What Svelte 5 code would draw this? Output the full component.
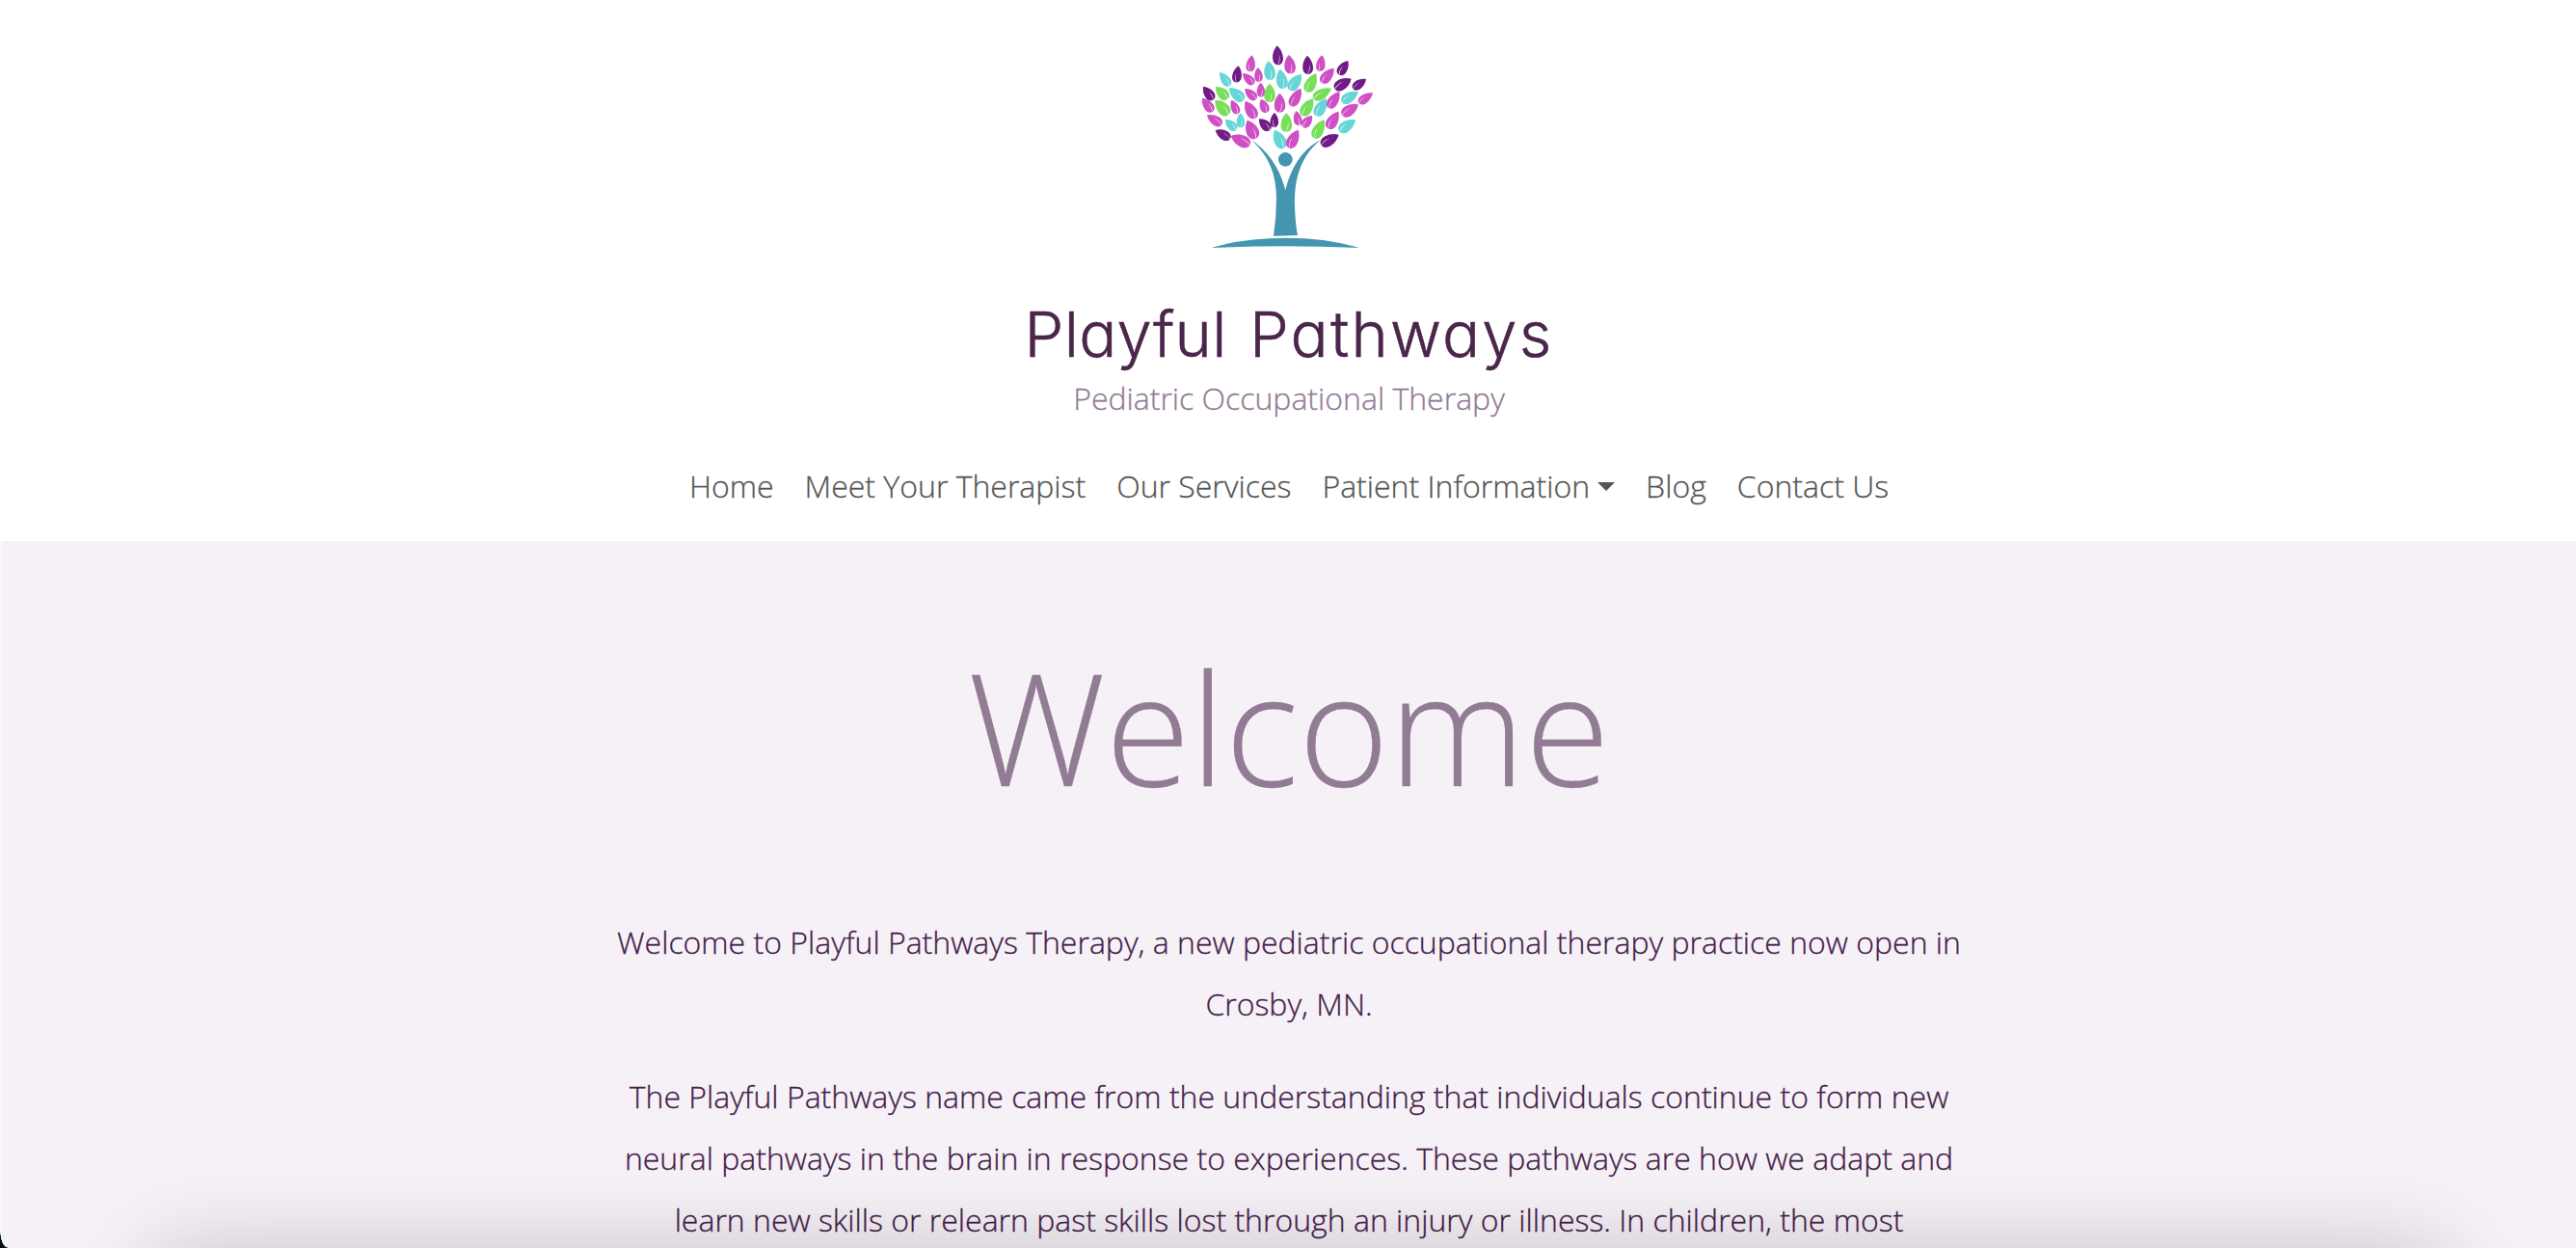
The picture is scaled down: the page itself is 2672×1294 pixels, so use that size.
<script>
  // Each leaf: tip x, tip y, base x, base y, width, colour key
  const leaves = [
    [284, 22, 288, 82, 30, 'v'], [206, 52, 199, 103, 26, 'p'], [164, 85, 156, 136, 27, 'v'],
    [224, 90, 228, 135, 24, 'p'], [177, 108, 212, 142, 24, 'p'], [106, 105, 137, 147, 26, 'c'],
    [257, 70, 264, 129, 32, 'c'], [292, 95, 304, 156, 32, 'c'], [54, 149, 86, 190, 28, 'v'],
    [93, 150, 131, 187, 30, 'g'], [135, 154, 180, 192, 32, 'c'], [184, 156, 219, 189, 26, 'p'],
    [233, 137, 234, 182, 24, 'p'], [261, 140, 261, 198, 32, 'g'], [51, 185, 84, 227, 28, 'p'],
    [91, 191, 134, 236, 34, 'g'], [142, 191, 162, 234, 24, 'p'], [185, 194, 217, 248, 32, 'p'],
    [234, 188, 252, 230, 26, 'p'], [292, 170, 293, 230, 32, 'p'], [66, 238, 112, 268, 28, 'p'],
    [123, 252, 157, 284, 26, 'c'], [170, 232, 171, 277, 24, 'c'], [228, 250, 262, 284, 28, 'v'],
    [276, 230, 275, 276, 24, 'v'], [313, 232, 313, 290, 32, 'g'], [191, 254, 218, 311, 36, 'p'],
    [92, 285, 138, 311, 28, 'v'], [140, 303, 200, 330, 34, 'p'], [276, 284, 305, 341, 34, 'c'],
    [350, 284, 320, 340, 32, 'p'], [320, 51, 327, 109, 32, 'p'], [378, 53, 381, 111, 30, 'v'],
    [424, 52, 417, 102, 26, 'p'], [461, 92, 422, 137, 30, 'p'], [505, 69, 476, 112, 28, 'v'],
    [360, 111, 322, 160, 32, 'c'], [405, 108, 376, 166, 32, 'g'], [515, 125, 463, 156, 32, 'v'],
    [561, 126, 520, 156, 26, 'v'], [453, 155, 397, 187, 30, 'g'], [358, 155, 327, 210, 30, 'p'],
    [537, 166, 485, 197, 30, 'c'], [582, 169, 538, 200, 26, 'p'], [478, 165, 444, 216, 30, 'p'],
    [396, 187, 362, 239, 32, 'g'], [437, 186, 405, 240, 32, 'c'], [537, 205, 486, 238, 32, 'p'],
    [343, 225, 352, 270, 24, 'p'], [393, 240, 364, 275, 26, 'p'], [475, 227, 442, 280, 32, 'p'],
    [528, 253, 477, 288, 32, 'c'], [430, 252, 399, 310, 32, 'g'], [476, 299, 421, 331, 32, 'v']
  ].map(([tx, ty, bx, by, w, tone]) => {
    const len = Math.hypot(bx - tx, by - ty);
    const turn = (Math.atan2(by - ty, bx - tx) * 180) / Math.PI - 90;
    const h = w / 2;
    const side = bx >= tx ? -1 : 1;
    return {
      tone,
      at: `translate(${tx} ${ty}) rotate(${turn})`,
      body: `M0 0C${h * 0.6} ${len * 0.15} ${h * 1.08} ${len * 0.38} ${h * 1.08} ${len * 0.65}C${h * 1.08} ${len * 0.86} ${h * 0.6} ${len} 0 ${len}C${-h * 0.6} ${len} ${-h * 1.08} ${len * 0.86} ${-h * 1.08} ${len * 0.65}C${-h * 1.08} ${len * 0.38} ${-h * 0.6} ${len * 0.15} 0 0Z`,
      vein: `M${side * h * 0.05} ${len}Q${side * h * -0.6} ${len * 0.75} ${side * h * -0.3} ${len * 0.45}Q${side * h * -0.4} ${len * 0.78} ${side * h * 0.15} ${len}Z`
    };
  });

  const links = [
    { label: 'Home' },
    { label: 'Meet Your Therapist' },
    { label: 'Our Services' },
    { label: 'Patient Information', menu: true },
    { label: 'Blog' },
    { label: 'Contact Us' }
  ];

  const paragraphs = [
    ['Welcome to Playful Pathways Therapy, a new pediatric occupational therapy practice now open in', 'Crosby, MN.'],
    [
      'The Playful Pathways name came from the understanding that individuals continue to form new',
      'neural pathways in the brain in response to experiences. These pathways are how we adapt and',
      'learn new skills or relearn past skills lost through an injury or illness. In children, the most'
    ]
  ];
</script>

<div class="page">
  <header>
    <svg class="logo" viewBox="-9 0 660 660" aria-hidden="true">
      {#each leaves as leaf}
        <g transform={leaf.at}>
          <path class={leaf.tone} d={leaf.body} />
          <path class="vein" d={leaf.vein} />
        </g>
      {/each}
      <g class="trunk">
        <path d="M203 314C246 344 289 389 310 471C331 390 367 343 420 314C351 372 338 445 339 518Q340 570 348 612L273 614Q282 555 282 495C281 425 262 368 203 314Z" />
        <circle cx="310" cy="376" r="22" />
        <path d="M80 651Q180 620 310 620Q440 620 540 651Q425 646 310 646Q195 646 80 651Z" />
      </g>
    </svg>
    <h1><span class="first">Playful</span> <span class="second">Pathways</span></h1>
    <p class="tagline">Pediatric Occupational Therapy</p>
    <nav>
      {#each links as link}
        <a href="#top">{link.label}{#if link.menu}<i class="caret"></i>{/if}</a>
      {/each}
    </nav>
  </header>

  <main>
    <h2>Welcome</h2>
    {#each paragraphs as lines}
      <p>{#each lines as line}<span>{line}</span>{/each}</p>
    {/each}
  </main>

  <div class="shade"></div>
  <div class="corner"></div>
</div>

<style>
  :global(body) {
    margin: 0;
  }
  .page {
    position: relative;
    box-sizing: border-box;
    height: 1294px;
    padding-left: 2px;
    overflow: hidden;
    background: linear-gradient(90deg, #faf8fb 2px, #f6f1f7 2px);
    font-family: 'Open Sans', sans-serif;
    font-weight: 300;
    font-size: 32px;
    text-align: center;
    -webkit-text-stroke: 0.3px currentColor;
  }
  header {
    box-sizing: border-box;
    height: 561px;
    margin-left: -2px;
    padding: 40px 0 0 2px;
    background: #fff;
    display: flex;
    flex-direction: column;
    align-items: center;
  }
  .logo {
    width: 220px;
    height: 220px;
    flex: none;
  }
  .v { fill: #701b88; }
  .p { fill: #cf50c5; }
  .c { fill: #68d5d7; }
  .g { fill: #78de5b; }
  .vein { fill: #fff; }
  .trunk { fill: #4496b0; }
  h1 {
    margin: 47px 0 0;
    font: 300 65px/80px Inter, sans-serif;
    font-feature-settings: 'cv11';
    word-spacing: 5px;
    color: #4b264b;
    white-space: nowrap;
    -webkit-text-stroke: 0.5px currentColor;
  }
  .first {
    letter-spacing: 0.3px;
  }
  .second {
    letter-spacing: 2.2px;
  }
  .tagline {
    margin: 4px 0 0;
    line-height: 44px;
    color: #927b94;
  }
  nav {
    display: flex;
    gap: 32px;
    margin-top: 45px;
    line-height: 48px;
  }
  nav a {
    display: flex;
    align-items: center;
    color: #555;
    text-decoration: none;
    white-space: nowrap;
  }
  .caret {
    margin-left: 8px;
    border: 9px solid transparent;
    border-top: 9px solid #555;
    border-bottom: 0;
  }
  h2 {
    margin: 0;
    padding: 96px 0;
    font-size: 160px;
    line-height: 192px;
    font-weight: 300;
    color: #927b94;
  }
  main p {
    margin: 0 0 32px;
    line-height: 64px;
    color: #45204a;
  }
  main span {
    display: block;
    white-space: nowrap;
  }
  .shade {
    position: absolute;
    top: 1310px;
    left: 165px;
    right: 140px;
    height: 200px;
    box-shadow: 0 0 100px rgba(0, 0, 0, 0.27);
  }
  .corner {
    position: absolute;
    left: 0;
    bottom: 0;
    width: 8px;
    height: 18px;
    background: radial-gradient(ellipse 8px 18px at 100% 0, transparent 94%, #06101c 100%);
  }
</style>
